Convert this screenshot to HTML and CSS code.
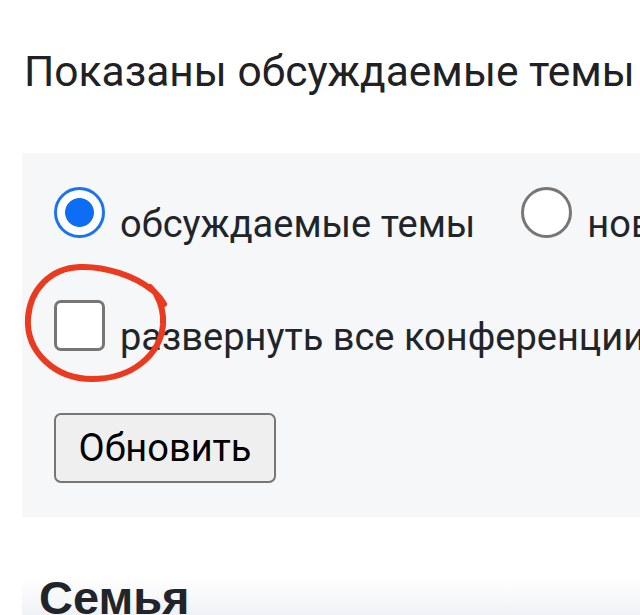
FILE: index.html
```html
<!DOCTYPE html>
<html lang="ru">
<head>
<meta charset="utf-8">
<link rel="stylesheet" href="styles.css">
</head>
<body>
<h1 class="title">Показаны обсуждаемые темы</h1>
<form class="panel">
  <div class="row row-radios">
    <label class="opt"><input class="radio" type="radio" name="mode" checked><span>обсуждаемые темы</span></label>
    <label class="opt"><input class="radio" type="radio" name="mode"><span>новые темы</span></label>
  </div>
  <div class="row row-check">
    <label class="opt"><input class="check" type="checkbox"><span>развернуть все конференции</span></label>
    <svg class="scribble" width="160" height="130" viewBox="20 260 160 130" aria-hidden="true">
      <path d="M152 290 C 135 276, 105 266, 80 267 C 50 268, 30 290, 28 318 C 26 352, 55 379, 92 379 C 132 379, 160 355, 163 325 C 164 312, 161 303, 156 294 M 150 287 L 160 298 L 164 304" fill="none" stroke="#ea3a1f" stroke-width="6" stroke-linecap="round" stroke-linejoin="round"/>
    </svg>
  </div>
  <div class="row row-btn">
    <button type="button" class="btn">Обновить</button>
  </div>
</form>
<section class="group">
  <h2 class="group-title">Семья</h2>
</section>
</body>
</html>
```
FILE: styles.css
```css
html, body {
  margin: 0;
  padding: 0;
  background: #ffffff;
  overflow: hidden;
}
body {
  width: 640px;
  height: 615px;
  font-family: Roboto, "Noto Sans", sans-serif;
  color: #212529;
}
.title {
  margin: 0;
  padding: 45px 0 0 24px;
  font-weight: 400;
  font-size: 42.5px;
  line-height: 54px;
  white-space: nowrap;
  color: #202124;
}
.panel {
  margin: 54px 0 0 22px;
  background: #f6f7f9;
  padding: 34px 0 34px 32px;
  width: 700px;
  box-sizing: border-box;
}
.row {
  display: flex;
  align-items: flex-end;
  white-space: nowrap;
  font-size: 38px;
  line-height: 51px;
  height: 51px;
}
.row-check {
  margin-top: 62px;
  position: relative;
}
.row-btn {
  margin-top: 62px;
  height: 70px;
}
.opt {
  display: flex;
  align-items: flex-end;
}
.opt + .opt {
  margin-left: 46px;
}
.opt span {
  margin-left: 15px;
  line-height: 1;
  position: relative;
  top: 5px;
}
.radio {
  appearance: none;
  -webkit-appearance: none;
  margin: 0;
  width: 51px;
  height: 51px;
  border-radius: 50%;
  border: 3px solid #767676;
  background: #fff;
  box-sizing: border-box;
  flex: none;
}
.radio:checked {
  border-color: #1a73f0;
  background: radial-gradient(circle, #0d6ef5 0 14px, #fff 14.8px);
}
.check {
  appearance: none;
  -webkit-appearance: none;
  margin: 0;
  width: 51px;
  height: 51px;
  border-radius: 7px;
  border: 3px solid #767676;
  background: #fff;
  box-sizing: border-box;
  flex: none;
}
.scribble {
  position: absolute;
  left: -34px;
  top: -40px;
  overflow: visible;
}
.btn {
  margin: 0;
  width: 222px;
  height: 70px;
  border: 2px solid #767676;
  border-radius: 7px;
  background: #efefef;
  font-family: Roboto, "Noto Sans", sans-serif;
  font-size: 38px;
  color: #000;
  padding: 0;
}
.group {
  margin: 61px 0 0 22px;
  padding: 0 0 0 17px;
  height: 80px;
  background: linear-gradient(#ffffff, #eef1f5 40px);
}
.group-title {
  margin: 0;
  padding-top: 0;
  font-family: "Liberation Sans", Arial, sans-serif;
  font-weight: 700;
  font-size: 47px;
  line-height: 40px;
  color: #212529;
}
```
